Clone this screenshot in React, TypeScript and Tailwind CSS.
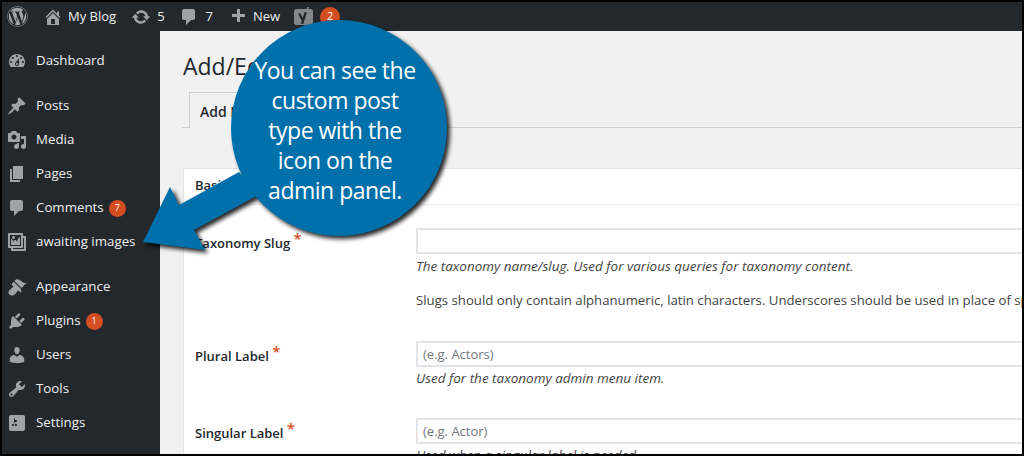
import { FaWordpress } from "react-icons/fa";

const FONT = "font-['Open_Sans','Noto_Sans',sans-serif]";

const ICONS: Record<string, string> = {
  home: "M16 8.5l1.53 1.53-1.06 1.06L10 4.62l-6.47 6.47-1.06-1.06L10 2.5l4 4v-2h2v4zm-6-2.46l6 5.99V18H4v-5.97zM12 17v-5H8v5h4z",
  update: "M10.2 3.28c3.53 0 6.43 2.61 6.92 6h2.08l-3.5 4-3.5-4h2.32c-.45-1.97-2.21-3.45-4.32-3.45-1.45 0-2.73.71-3.54 1.78L4.95 5.66C6.23 4.2 8.11 3.28 10.2 3.28zm-.4 13.44c-3.52 0-6.43-2.61-6.92-6H.8l3.5-4c1.17 1.33 2.33 2.67 3.5 4H5.48c.45 1.97 2.21 3.45 4.32 3.45 1.45 0 2.73-.71 3.54-1.78l1.71 1.95c-1.28 1.46-3.15 2.38-5.25 2.38z",
  comment: "M5 2h9c1.1 0 2 .9 2 2v7c0 1.1-.9 2-2 2h-2l-5 5v-5H5c-1.1 0-2-.9-2-2V4c0-1.1.9-2 2-2z",
  plus: "M17 7v3h-5v5H9v-5H4V7h5V2h3v5h5z",
  dashboard: "M3.76 16h12.48c1.1-1.37 1.76-3.11 1.76-5 0-4.42-3.58-8-8-8s-8 3.58-8 8c0 1.89.66 3.63 1.76 5zM10 4c.55 0 1 .45 1 1s-.45 1-1 1-1-.45-1-1 .45-1 1-1zM6 6c.55 0 1 .45 1 1s-.45 1-1 1-1-.45-1-1 .45-1 1-1zm8 0c.55 0 1 .45 1 1s-.45 1-1 1-1-.45-1-1 .45-1 1-1zm-5.37 5.55L12 7v6c0 1.1-.9 2-2 2s-2-.9-2-2c0-.57.24-1.08.63-1.45zM4 10c.55 0 1 .45 1 1s-.45 1-1 1-1-.45-1-1 .45-1 1-1zm12 0c.55 0 1 .45 1 1s-.45 1-1 1-1-.45-1-1 .45-1 1-1zm-5 3c0-.55-.45-1-1-1s-1 .45-1 1 .45 1 1 1 1-.45 1-1z",
  post: "M10.44 3.02l1.82-1.82 6.36 6.35-1.83 1.82c-1.05-.68-2.48-.57-3.41.36l-.75.75c-.92.93-1.04 2.35-.35 3.41l-1.83 1.82-2.41-2.41-2.8 2.79c-.42.42-3.38 2.71-3.8 2.29s1.86-3.39 2.28-3.81l2.79-2.79L4.1 9.36l1.83-1.82c1.05.69 2.48.57 3.4-.36l.75-.75c.93-.92 1.05-2.35.36-3.41z",
  media: "M13 11V4c0-.55-.45-1-1-1h-1.67L9 1H5L3.67 3H2c-.55 0-1 .45-1 1v7c0 .55.45 1 1 1h10c.55 0 1-.45 1-1zM7 4.5c1.38 0 2.5 1.12 2.5 2.5S8.38 9.5 7 9.5 4.5 8.38 4.5 7 5.62 4.5 7 4.5zM14 6h5v10.5c0 1.38-1.12 2.5-2.5 2.5S14 17.88 14 16.5s1.12-2.5 2.5-2.5c.17 0 .34.02.5.05V9h-3V6zm-4 8.05V13h2v3.5c0 1.38-1.12 2.5-2.5 2.5S7 17.88 7 16.5 8.12 14 9.5 14c.17 0 .34.02.5.05z",
  page: "M6 15V2h10v13H6zm-1 1h8v2H3V5h2v11z",
  gallery: "M16 4h1.96c.57 0 1.04.47 1.04 1.04v12.92c0 .57-.47 1.04-1.04 1.04H5.04C4.47 19 4 18.53 4 17.96V16H2.04C1.47 16 1 15.53 1 14.96V2.04C1 1.47 1.47 1 2.04 1h12.92c.57 0 1.04.47 1.04 1.04V4zM3 14h11V3H3v11zm5-8.5C8 4.67 7.33 4 6.5 4S5 4.67 5 5.5 5.67 7 6.5 7 8 6.33 8 5.5zm2 4.5s1-5 3-5v8H4V7c2 0 2 3 2 3s.33-2 2-2 2 2 2 2zm7 7V6h-1v8.96c0 .57-.47 1.04-1.04 1.04H6v1h11z",
  appearance: "M14.48 11.06L7.41 3.99l1.5-1.5c.5-.56 2.3-.47 3.51.32 1.21.8 1.43 1.28 2.91 2.1 1.18.64 2.45 1.26 4.45.85zm-.71.71L6.7 4.7 4.93 6.47c-.39.39-.39 1.02 0 1.41l1.06 1.06c.39.39.39 1.03 0 1.42-.6.6-1.43 1.11-2.21 1.69-.35.26-.7.53-1.01.84C1.43 13.23.91 15.98 2.44 17.51c1.53 1.53 4.27 1.01 5.6-.33.31-.31.58-.66.84-1.01.58-.78 1.09-1.61 1.69-2.21.39-.39 1.02-.39 1.41 0l1.06 1.06c.39.39 1.02.39 1.41 0z",
  plugins: "M13.11 4.36L9.87 7.6 8 5.73l3.24-3.24c.35-.34 1.05-.2 1.56.32.52.51.66 1.21.31 1.55zm-8 1.77l.91-1.12 9.01 9.01-1.19.84c-.71.71-2.63 1.16-3.82 1.16H6.14L4.9 17.26c-.59.59-1.54.59-2.12 0-.59-.58-.59-1.53 0-2.12l1.24-1.24v-3.88c0-1.13.4-3.19 1.09-3.89zm7.26 3.97l3.24-3.24c.34-.35 1.04-.21 1.55.31.52.51.66 1.21.31 1.55l-3.24 3.25z",
  users: "M10 9.25c-2.27 0-2.73-3.44-2.73-3.44C7 4.02 7.82 2 9.97 2c2.16 0 2.98 2.02 2.71 3.81 0 0-.41 3.44-2.68 3.44zm0 2.57L12.72 10c2.39 0 4.52 2.33 4.52 4.53v2.49s-3.65 1.13-7.24 1.13c-3.65 0-7.24-1.13-7.24-1.13v-2.49c0-2.25 1.94-4.48 4.47-4.48z",
  tools: "M16.68 9.77c-1.34 1.34-3.3 1.67-4.95.99l-5.41 6.52c-.99.99-2.59.99-3.58 0s-.99-2.59 0-3.57l6.52-5.42c-.68-1.65-.35-3.61.99-4.95 1.28-1.28 3.12-1.62 4.72-1.06l-2.89 2.89 2.82 2.82 2.86-2.87c.53 1.58.18 3.39-1.08 4.65zM3.81 16.21c.4.39 1.04.39 1.43 0 .4-.4.4-1.04 0-1.43-.39-.4-1.03-.4-1.43 0-.39.39-.39 1.03 0 1.43z",
  settings: "M18 16V4c0-1.1-.9-2-2-2H4c-1.1 0-2 .9-2 2v12c0 1.1.9 2 2 2h12c1.1 0 2-.9 2-2zM8 11h1c.55 0 1 .45 1 1s-.45 1-1 1H8v1.5c0 .28-.22.5-.5.5s-.5-.22-.5-.5V13H6c-.55 0-1-.45-1-1s.45-1 1-1h1V5.5c0-.28.22-.5.5-.5s.5.22.5.5V7h1c.55 0 1 .45 1 1s-.45 1-1 1h-1v5.5c0 .28-.22.5-.5.5s-.5-.22-.5-.5V9z",
};

function Dash({ name, size = 20 }: { name: string; size?: number }) {
  return (
    <svg width={size} height={size} viewBox="0 0 20 20" fill="currentColor" fillRule="evenodd" className="shrink-0">
      <path d={ICONS[name]} />
    </svg>
  );
}

function Badge({ n }: { n: number }) {
  return (
    <span className="ml-[5px] flex h-[17px] w-[17px] items-center justify-center rounded-full bg-[#d54e21] text-[9px] text-white">
      {n}
    </span>
  );
}

const MENU_GROUPS = [
  [{ icon: "dashboard", label: "Dashboard" }],
  [
    { icon: "post", label: "Posts" },
    { icon: "media", label: "Media" },
    { icon: "page", label: "Pages" },
    { icon: "comment", label: "Comments", badge: 7 },
    { icon: "gallery", label: "awaiting images" },
  ],
  [
    { icon: "appearance", label: "Appearance" },
    { icon: "plugins", label: "Plugins", badge: 1 },
    { icon: "users", label: "Users" },
    { icon: "tools", label: "Tools" },
    { icon: "settings", label: "Settings" },
  ],
];

function Sidebar() {
  return (
    <aside className="flex w-[158px] shrink-0 flex-col gap-[11px] bg-[#23282d] pt-[13px]">
      {MENU_GROUPS.map((group, i) => (
        <ul key={i}>
          {group.map((item) => (
            <li key={item.label} className="flex h-[34px] items-center pl-[5px] text-[13.3px] text-[#eeeeee]">
              <span className="flex w-[29px] shrink-0 text-[#9ea3a8]">
                <Dash name={item.icon} />
              </span>
              <span className="whitespace-nowrap">{item.label}</span>
              {item.badge ? <Badge n={item.badge} /> : null}
            </li>
          ))}
        </ul>
      ))}
    </aside>
  );
}

function TopBar() {
  return (
    <header className="flex h-[29px] shrink-0 items-center bg-[#23282d] text-[13px] text-[#eeeeee]">
      <FaWordpress className="ml-[5px] text-[21px] text-[#9ea3a8]" />
      <span className="ml-[15px] text-[#9ea3a8]"><Dash name="home" /></span>
      <span className="ml-[5px]">My Blog</span>
      <span className="ml-[15px] text-[#9ea3a8]"><Dash name="update" /></span>
      <span className="ml-[6px]">5</span>
      <span className="ml-[14px] text-[#9ea3a8]"><Dash name="comment" /></span>
      <span className="ml-[7px]">7</span>
      <span className="ml-[15px] text-[#9ea3a8]"><Dash name="plus" /></span>
      <span className="ml-[5px]">New</span>
      {/* yoast mark */}
      <svg width="20" height="20" viewBox="0 0 20 20" className="ml-[14px]">
        <rect x="0" y="2" width="19" height="16" rx="2.500" fill="#82878c" />
        <path d="M4 6.500h2.600l2 4.400 2.100-6h2.500l-4 12H6.800l1-3z" fill="#23282d" />
        <path d="M11.500 5 13.800 -1H15.500L13 6z" fill="#82878c" />
      </svg>
      <span className="ml-[6px] flex h-[20px] w-[20px] items-center justify-center rounded-full bg-[#d54e21] text-[11px] text-white">2</span>
    </header>
  );
}

function Field({ label, placeholder, top, children }: { label: string; placeholder?: string; top: string; children: React.ReactNode }) {
  return (
    <div className={`flex ${top}`}>
      <label className="w-[232px] shrink-0 pl-[11px] pt-[6px] text-[13px] font-semibold whitespace-nowrap text-[#23282d]">
        {label} <sup className="top-[-4px] text-[15px] leading-none text-[#d54e21]">*</sup>
      </label>
      <div className="min-w-0 flex-1">
        <div className="flex h-[26px] w-[640px] items-center border-2 border-r-0 border-[#e2e4e7] bg-white pl-[5px] pt-[2px] text-[13px] text-[#72777c]">
          {placeholder}
        </div>
        {children}
      </div>
    </div>
  );
}

function Callout() {
  return (
    <div className="absolute left-[130px] top-[14px] h-[250px] w-[330px]">
      <svg width="330" height="250" viewBox="130 14 330 250" className="[filter:drop-shadow(3px_3px_2px_rgba(0,0,0,0.85))]">
        <circle cx="337" cy="126" r="108" fill="#0070ab" />
        <path d="M237 170 177 203 168 185 141 240 203 248 192 228 258 192Z" fill="#0070ab" />
      </svg>
      <p className={`absolute left-[103px] top-[39px] w-[200px] text-center text-[23px] leading-[30px] tracking-[-0.5px] text-white ${FONT}`}>
        You can see the
        <br />
        custom post
        <br />
        type with the
        <br />
        icon on the
        <br />
        admin panel.
      </p>
    </div>
  );
}

export default function App() {
  return (
    <div className={`relative flex h-[456px] w-[1024px] flex-col overflow-hidden border-2 border-black bg-[#f1f1f1] ${FONT}`}>
      <TopBar />
      <div className="flex min-h-0 flex-1">
        <Sidebar />
        <main className="min-w-0 flex-1 overflow-hidden">
          <h1 className="ml-[23px] mt-[19px] h-[32px] text-[23px] leading-[32px] whitespace-nowrap text-[#23282d]">
            Add/Edit Taxonomies
          </h1>
          <div className="ml-[22px] mt-[10px] h-[36px] border-b border-[#ccd0d4] pl-[7px]">
            <div className="h-[36px] w-[150px] border border-b-0 border-[#ccd0d4] bg-[#f1f1f1] pl-[10px] pt-[8px] text-[14px] font-semibold whitespace-nowrap text-[#23282d]">
              Add New Taxonomy
            </div>
          </div>
          <section className="ml-[23px] mt-[40px] border border-r-0 border-[#e2e4e7] bg-white">
            <div className="h-[36px] border-b border-[#eeeeee] pl-[11px] pt-[7px] text-[13px] font-semibold text-[#23282d]">
              Basic settings
            </div>
            <Field label="Taxonomy Slug" top="mt-[23px]">
              <p className="mt-[2px] text-[13.5px] leading-[20px] whitespace-nowrap text-[#444444] italic">
                The taxonomy name/slug. Used for various queries for taxonomy content.
              </p>
              <p className="mt-[14px] text-[13.2px] leading-[20px] whitespace-nowrap text-[#444444]">
                Slugs should only contain alphanumeric, latin characters. Underscores should be used in place of spaces.
              </p>
            </Field>
            <Field label="Plural Label" placeholder="(e.g. Actors)" top="mt-[31px]">
              <p className="mt-[1px] text-[13.5px] leading-[20px] whitespace-nowrap text-[#444444] italic">
                Used for the taxonomy admin menu item.
              </p>
            </Field>
            <Field label="Singular Label" placeholder="(e.g. Actor)" top="mt-[30px]">
              <p className="mt-[1px] text-[13.5px] leading-[20px] whitespace-nowrap text-[#444444] italic">
                Used when a singular label is needed.
              </p>
            </Field>
          </section>
        </main>
      </div>
      <Callout />
    </div>
  );
}
